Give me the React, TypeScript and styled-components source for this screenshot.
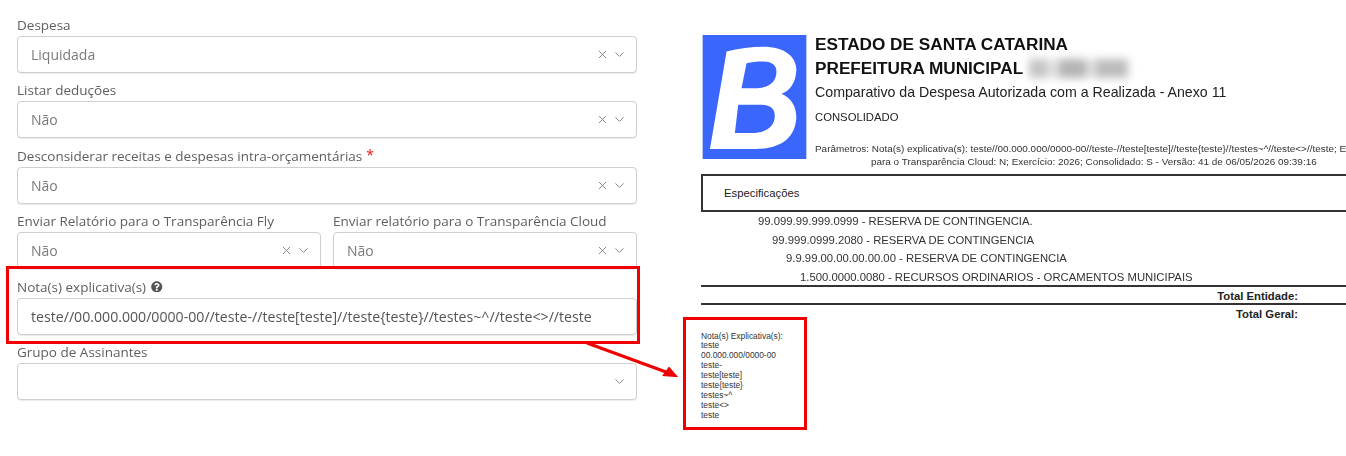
import styled, { createGlobalStyle } from "styled-components";
import { X, ChevronDown } from "lucide-react";
import { FaQuestionCircle } from "react-icons/fa";

const GlobalStyle = createGlobalStyle`
    html, body {
        margin: 0;
        padding: 0;
        background: #fff;
    }
    * {
        box-sizing: border-box;
    }
`;

const Page = styled.div`
    position: relative;
    display: flex;
    width: 1346px;
    height: 456px;
    overflow: hidden;
    background: #fff;
`;

const FormPanel = styled.div`
    width: 654px;
    flex-shrink: 0;
    padding: 17px 17px 0 17px;
    display: flex;
    flex-direction: column;
    gap: 9.4px;
    font-family: "Open Sans", sans-serif;
`;

const Row = styled.div`
    display: grid;
    grid-template-columns: 1fr 1fr;
    gap: 12px;
`;

const Field = styled.div`
    min-width: 0;
`;

const NoteField = styled(Field)`
    position: relative;

    &::after {
        content: "";
        position: absolute;
        top: -13px;
        left: -11px;
        right: -3px;
        bottom: -9px;
        border: 3px solid #f00000;
        pointer-events: none;
    }
`;

const Label = styled.label`
    display: flex;
    align-items: center;
    height: 19px;
    padding-bottom: 3px;
    font-size: 13.5px;
    color: #5f5f5f;
    white-space: nowrap;
    filter: blur(0.3px);
`;

const Required = styled.span`
    align-self: flex-start;
    margin-left: 4px;
    margin-top: -3px;
    color: #f01010;
    font-size: 14px;
`;

const HelpIcon = styled(FaQuestionCircle)`
    margin-left: 5px;
    font-size: 11.5px;
    color: #555;
`;

const SelectBox = styled.div`
    display: flex;
    align-items: center;
    height: 37px;
    padding: 0 9px 0 13px;
    border: 1px solid #cfcfcf;
    border-radius: 4px;
    box-shadow: 0 1px 1px rgba(0, 0, 0, 0.08);
    background: #fff;
`;

const Value = styled.span<{ $dark?: boolean }>`
    flex: 1;
    font-size: ${(props) => (props.$dark ? "14.15px" : "14px")};
    color: ${(props) => (props.$dark ? "#555" : "#7a7a7a")};
    white-space: nowrap;
    filter: blur(0.3px);
`;

const ClearIcon = styled(X)`
    width: 13px;
    height: 13px;
    color: #777;
    margin-right: 3px;
`;

const ArrowIcon = styled(ChevronDown)`
    width: 15px;
    height: 15px;
    color: #888;
`;

const ReportPanel = styled.div`
    flex: 1;
    min-width: 0;
    padding-top: 32px;
    padding-left: 48px;
    font-family: "Liberation Sans", Arial, sans-serif;
    color: #222;
`;

const ReportHeader = styled.div`
    display: flex;
    height: 142px;
`;

const Logo = styled.svg`
    width: 105px;
    height: 124px;
    margin-top: 3px;
    flex-shrink: 0;
`;

const HeaderText = styled.div`
    margin-left: 8px;
    min-width: 0;
    flex: 1;
    filter: blur(0.3px);
`;

const Title = styled.div`
    display: flex;
    align-items: center;
    height: 24.5px;
    font-size: 17.2px;
    font-weight: 700;
    color: #111;
    white-space: nowrap;
`;

const Blurred = styled.span`
    display: inline-block;
    width: 99px;
    height: 19px;
    margin-left: 6px;
    background: linear-gradient(
        90deg,
        #c4c4c4 0 18%,
        #e2e2e2 18% 30%,
        #b4b4b4 30% 58%,
        #e0e0e0 58% 68%,
        #bcbcbc 68% 100%
    );
    filter: blur(4px);
`;

const Subtitle = styled.div`
    height: 23px;
    line-height: 23px;
    font-size: 14.2px;
    white-space: nowrap;
`;

const Consolidated = styled.div`
    height: 26px;
    line-height: 26px;
    font-size: 11.3px;
`;

const Params = styled.div`
    margin-top: 12px;
    font-size: 9.93px;
    line-height: 13px;
    color: #333;
    white-space: nowrap;
    overflow: hidden;
`;

const ParamsRest = styled.div`
    padding-left: 56px;
`;

const SpecBox = styled.div`
    display: flex;
    align-items: center;
    height: 38px;
    margin-left: -1px;
    margin-right: -4px;
    padding-left: 21px;
    border: 2px solid #333;
    font-size: 11.3px;
`;

const SpecRow = styled.div<{ $indent: number }>`
    height: 18.7px;
    line-height: 18.7px;
    padding-left: ${(props) => props.$indent}px;
    font-size: 11.3px;
    color: #333;
    white-space: nowrap;
    filter: blur(0.3px);
`;

const RowList = styled.div`
    height: 73px;
`;

const TotalRow = styled.div`
    height: 18px;
    line-height: 18px;
    padding-right: 48px;
    border-top: 2px solid #333;
    margin-left: -1px;
    text-align: right;
    font-size: 11.3px;
    font-weight: 700;
    color: #222;
`;

const NotesBox = styled.div`
    width: 124px;
    height: 113px;
    margin-top: -4px;
    margin-left: -19px;
    padding: 11.5px 0 0 15px;
    border: 3px solid #f00000;
    font-size: 8.4px;
    line-height: 9.9px;
    color: #333;
`;

const Pointer = styled.svg`
    position: absolute;
    top: 335px;
    left: 580px;
    width: 110px;
    height: 50px;
`;

const SelectField = ({ label, value }: { label: React.ReactNode; value?: string }) => (
    <Field>
        <Label>{label}</Label>
        <SelectBox>
            <Value>{value}</Value>
            {value && <ClearIcon strokeWidth={1.6} />}
            <ArrowIcon strokeWidth={1.6} />
        </SelectBox>
    </Field>
);

const specRows = [
    { indent: 8, text: "99.099.99.999.0999 - RESERVA DE CONTINGENCIA." },
    { indent: 22, text: "99.999.0999.2080 - RESERVA DE CONTINGENCIA" },
    { indent: 36, text: "9.9.99.00.00.00.00.00 - RESERVA DE CONTINGENCIA" },
    { indent: 50, text: "1.500.0000.0080 - RECURSOS ORDINARIOS - ORCAMENTOS MUNICIPAIS" },
];

const noteLines = [
    "Nota(s) Explicativa(s):",
    "teste",
    "00.000.000/0000-00",
    "teste-",
    "teste[teste]",
    "teste{teste}",
    "testes~^",
    "teste<>",
    "teste",
];

const App = () => {
    return (
        <Page>
            <GlobalStyle />
            <FormPanel>
                <SelectField label="Despesa" value="Liquidada" />
                <SelectField label="Listar deduções" value="Não" />
                <SelectField
                    label={
                        <>
                            Desconsiderar receitas e despesas intra-orçamentárias
                            <Required>*</Required>
                        </>
                    }
                    value="Não"
                />
                <Row>
                    <SelectField label="Enviar Relatório para o Transparência Fly" value="Não" />
                    <SelectField label="Enviar relatório para o Transparência Cloud" value="Não" />
                </Row>
                <NoteField>
                    <Label>
                        Nota(s) explicativa(s)
                        <HelpIcon />
                    </Label>
                    <SelectBox>
                        <Value $dark>
                            {"teste//00.000.000/0000-00//teste-//teste[teste]//teste{teste}//testes~^//teste<>//teste"}
                        </Value>
                    </SelectBox>
                </NoteField>
                <SelectField label="Grupo de Assinantes" />
            </FormPanel>
            <ReportPanel>
                <ReportHeader>
                    <Logo viewBox="23 15 312 373">
                        <rect x="23" y="15" width="312" height="373" fill="#3b66fb" />
                        <path
                            fill="#fff"
                            fillRule="evenodd"
                            d="M95 65 C130 55 170 50 205 50 C270 50 305 80 305 120 C303 160 285 182 260 192 C290 205 305 230 305 265 C300 325 260 358 180 358 L45 358 Z M155 100 L140 175 L180 175 C225 175 245 155 245 125 C245 105 230 95 205 95 C185 95 170 97 155 100 Z M130 225 L120 310 L170 310 C215 310 240 290 240 258 C240 235 225 225 195 225 Z"
                        />
                    </Logo>
                    <HeaderText>
                        <Title>ESTADO DE SANTA CATARINA</Title>
                        <Title>
                            PREFEITURA MUNICIPAL
                            <Blurred />
                        </Title>
                        <Subtitle>Comparativo da Despesa Autorizada com a Realizada - Anexo 11</Subtitle>
                        <Consolidated>CONSOLIDADO</Consolidated>
                        <Params>
                            {"Parâmetros: Nota(s) explicativa(s): teste//00.000.000/0000-00//teste-//teste[teste]//teste{teste}//testes~^//teste<>//teste; En"}
                            <ParamsRest>
                                para o Transparência Cloud: N; Exercício: 2026; Consolidado: S - Versão: 41 de 06/05/2026 09:39:16
                            </ParamsRest>
                        </Params>
                    </HeaderText>
                </ReportHeader>
                <SpecBox>Especificações</SpecBox>
                <RowList>
                    {specRows.map((row) => (
                        <SpecRow key={row.text} $indent={row.indent + 48}>
                            {row.text}
                        </SpecRow>
                    ))}
                </RowList>
                <TotalRow>Total Entidade:</TotalRow>
                <TotalRow>Total Geral:</TotalRow>
                <NotesBox>
                    {noteLines.map((line, i) => (
                        <div key={i}>{line}</div>
                    ))}
                </NotesBox>
            </ReportPanel>
            <Pointer viewBox="0 0 110 50">
                <line x1="7" y1="8" x2="86" y2="37" stroke="#f00000" strokeWidth="3" />
                <path d="M98.3 42.3 L82 41 L89 31.5 Z" fill="#f00000" />
            </Pointer>
        </Page>
    );
};

export default App;
